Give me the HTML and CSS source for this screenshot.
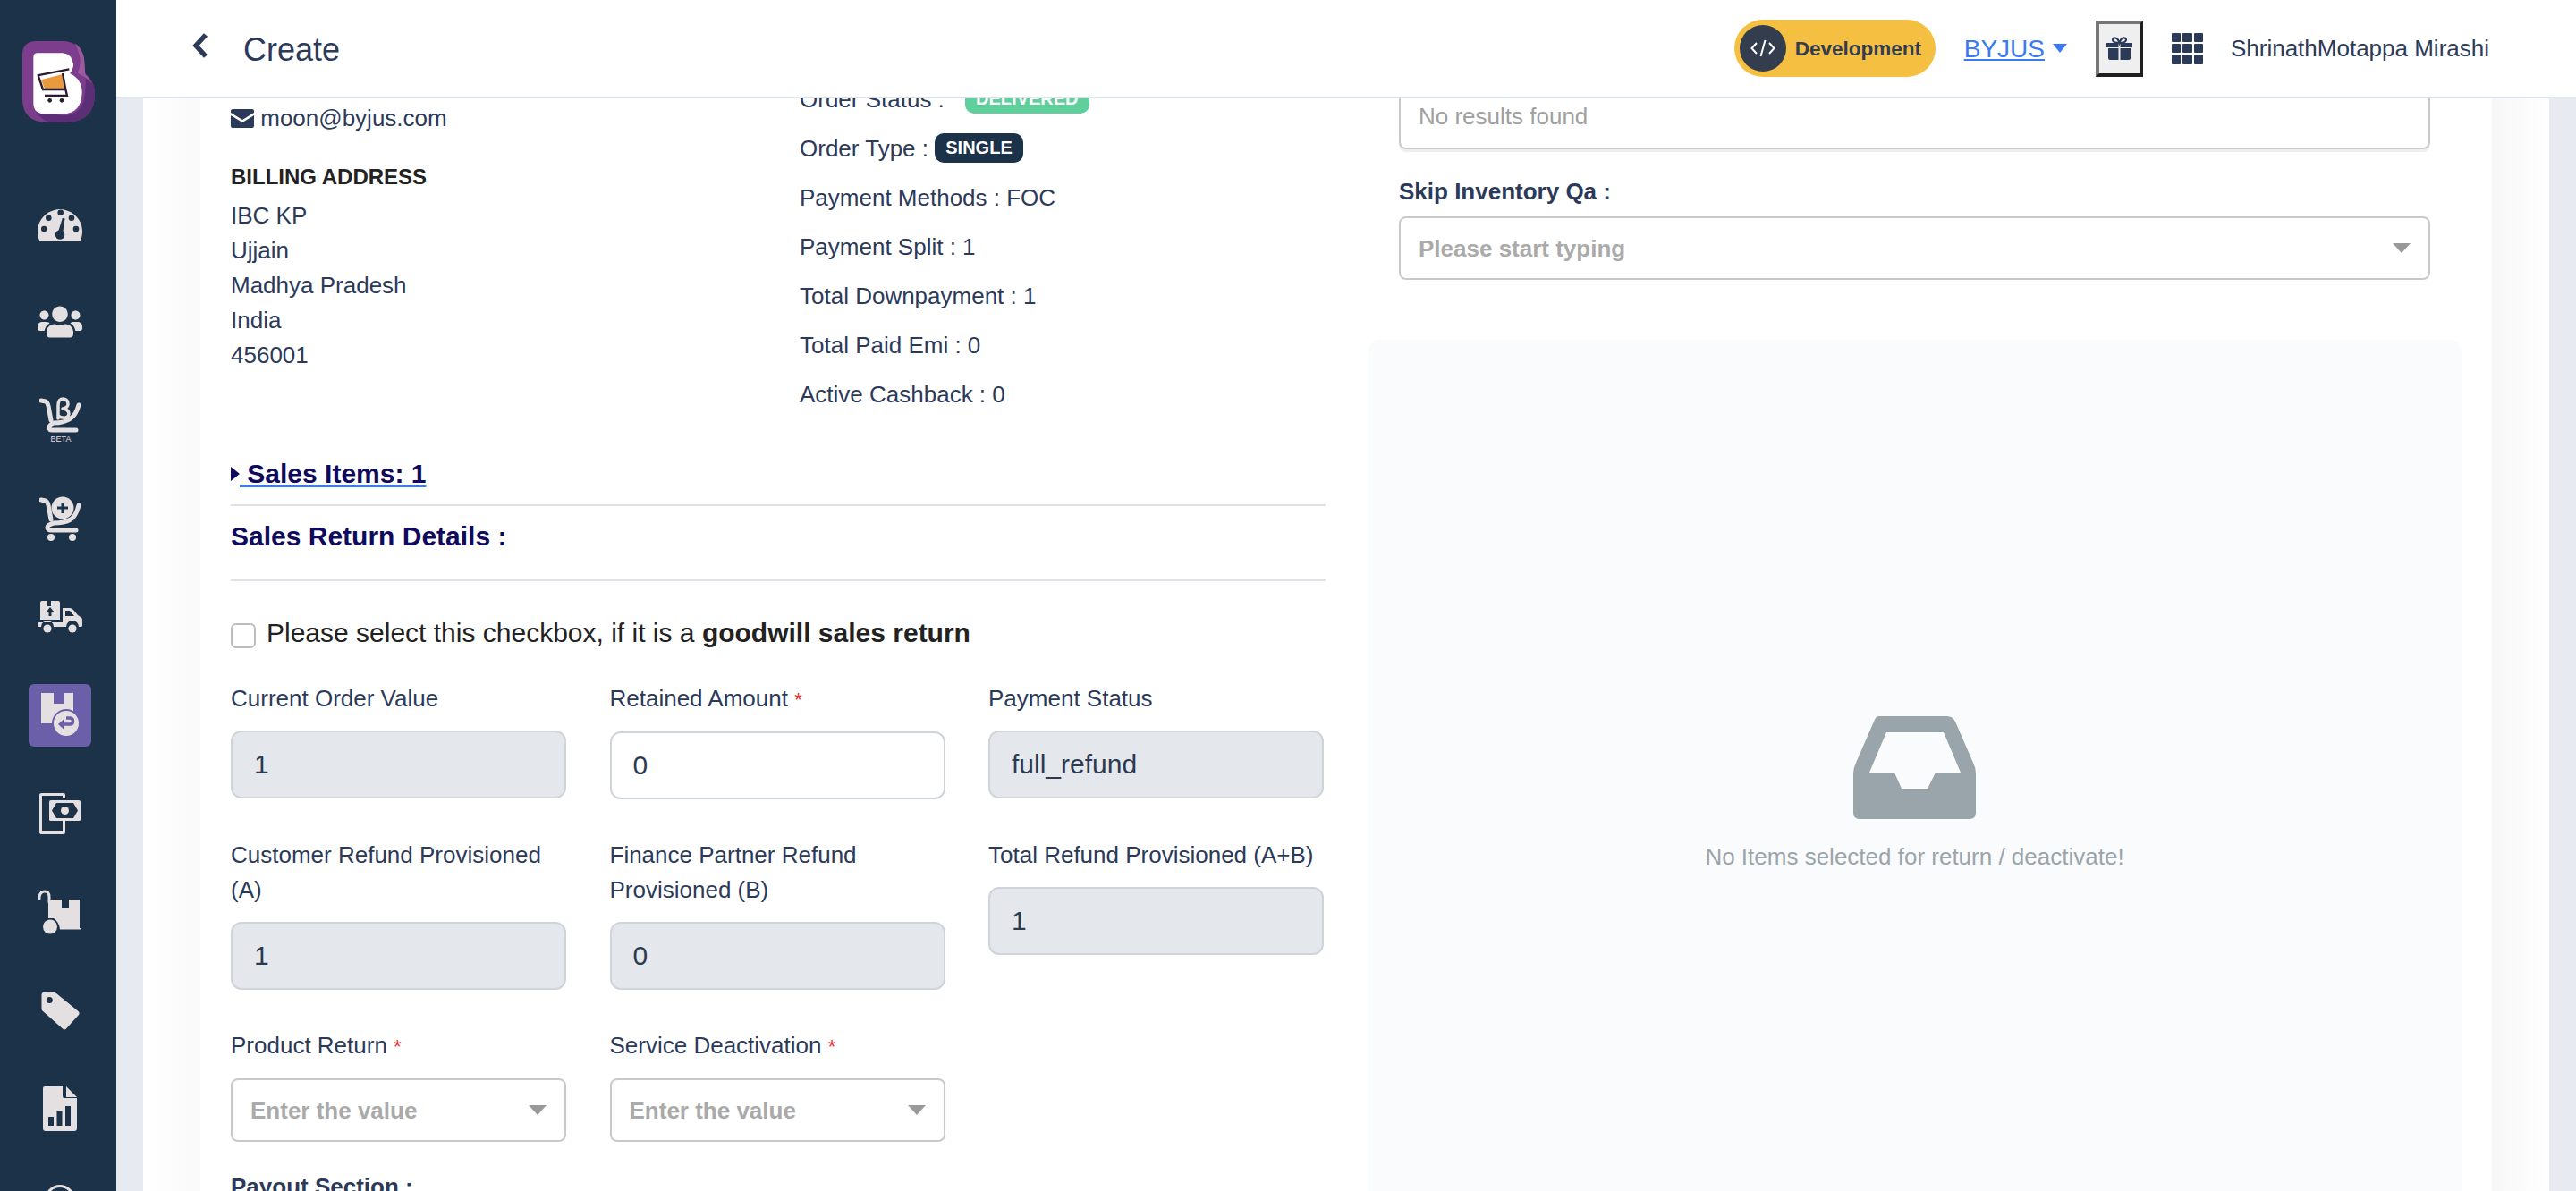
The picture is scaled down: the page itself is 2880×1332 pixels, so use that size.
FILE: index.html
```html
<!DOCTYPE html>
<html lang="en">
<head>
    <meta charset="UTF-8">
    <meta name="viewport" content="width=device-width, initial-scale=1.0">
    <title>Create</title>
    <link rel="stylesheet" href="styles.css">
</head>
<body>
    <div class="app">
        <aside class="sidebar">
            <svg class="logo" viewBox="0 0 300 330" width="100" height="110">
                <path fill="#7c3d8c" d="M15 65Q15 18 62 18H150Q205 18 222 75L226 128Q258 150 258 195Q258 290 160 290H95Q15 290 15 210Z"/>
                <path fill="#5b2e75" d="M60 255Q110 262 150 268Q205 268 222 215Q230 170 226 128Q258 150 258 195Q258 290 160 290H110Q80 285 60 255Z"/>
                <path fill="#9b5aa0" d="M190 25Q215 40 222 75L226 128Q240 140 248 160Q225 135 200 125Q222 80 190 25Z"/>
                <path fill="#fff" d="M52 72Q52 58 66 58H150Q180 60 186 95Q186 112 174 126Q215 145 215 190Q213 262 150 262H90Q52 262 52 225Z"/>
                <path fill="#e99a3c" d="M78 148L150 129L156 178L90 178Z"/>
                <path fill="none" stroke="#2b1c30" stroke-width="7" d="M65 133L172 112M68 133L84 180L160 180L150 126M160 180L165 201H90"/>
                <circle fill="#2b1c30" cx="107" cy="217" r="7"/>
                <circle fill="#2b1c30" cx="147" cy="217" r="7"/>
            </svg>
            <nav class="nav">
                <div class="nav-item">
                    <svg width="50" height="39" viewBox="0 0 50 39">
                        <path class="ico" d="M2.5 39A25 25 0 1 1 47.5 39Z"/>
                        <g class="ico-cut">
                            <circle cx="25.7" cy="6.7" r="3.3"/>
                            <circle cx="12.3" cy="12.7" r="3.3"/>
                            <circle cx="38" cy="12.7" r="3.3"/>
                            <circle cx="7.3" cy="25" r="3.3"/>
                            <circle cx="43" cy="25" r="3.3"/>
                            <circle cx="25" cy="31.5" r="5.2"/>
                            <path d="M22.5 30L27.8 13L30.5 13.6L28 31Z"/>
                        </g>
                    </svg>
                </div>
                <div class="nav-item">
                    <svg width="50" height="40" viewBox="0 0 640 512">
                        <path class="ico" d="M96 224c35.3 0 64-28.7 64-64s-28.7-64-64-64-64 28.7-64 64 28.7 64 64 64zm448 0c35.3 0 64-28.7 64-64s-28.7-64-64-64-64 28.7-64 64 28.7 64 64 64zm32 32h-64c-17.6 0-33.5 7.1-45.1 18.6 40.3 22.1 68.9 62 75.1 109.4h66c17.7 0 32-14.3 32-32v-32c0-35.3-28.7-64-64-64zm-256 0c61.9 0 112-50.1 112-112S381.9 32 320 32 208 82.1 208 144s50.1 112 112 112zm76.8 32h-8.3c-20.8 10-43.9 16-68.5 16s-47.6-6-68.5-16h-8.3C179.6 288 128 339.6 128 403.2V432c0 26.5 21.5 48 48 48h288c26.5 0 48-21.5 48-48v-28.8c0-63.6-51.6-115.2-115.2-115.2zm-223.7-13.4C161.5 263.1 145.6 256 128 256H64c-35.3 0-64 28.7-64 64v32c0 17.7 14.3 32 32 32h65.9c6.3-47.4 34.9-87.3 75.2-109.4z"/>
                    </svg>
                </div>
                <div class="nav-item">
                    <svg width="46" height="52" viewBox="0 0 46 52">
                        <g class="ico-line">
                            <path d="M2 4L7 5Q9 6 10 10L13 26"/>
                            <path d="M44 9Q41 20 35 24Q28 29 16 29Q11 31 11 34Q11 37 14 37H41"/>
                            <path class="beta-sign" d="M21 24V9Q21 2 27 2Q32 3 32 8Q32 12 26 13Q33 14 33 19Q32 24 26 23Q22 23 21 20"/>
                        </g>
                        <text class="beta" x="24" y="50" text-anchor="middle">BETA</text>
                    </svg>
                </div>
                <div class="nav-item">
                    <svg width="46" height="50" viewBox="0 0 46 50">
                        <g class="ico-line">
                            <path d="M2 4L7 5Q9 6 10 10L13 26"/>
                            <path d="M44 10Q41 22 35 26Q28 30 16 30Q9 32 9 35Q9 38 14 38H41"/>
                        </g>
                        <circle class="ico" cx="26" cy="13" r="12.5"/>
                        <path class="ico-cut-line" d="M26 7V19M20 13H32"/>
                        <circle class="ico" cx="13" cy="46" r="4"/>
                        <circle class="ico" cx="37" cy="46" r="4"/>
                    </svg>
                </div>
                <div class="nav-item">
                    <svg width="50" height="36" viewBox="0 0 50 36">
                        <path class="ico" d="M3 2Q3 0 5 0H11V6H15V0H23Q25 0 25 2V21H3Z"/>
                        <path class="ico" d="M28 8H36Q38 8 40 10L45 16L48 18Q50 19 50 21V28Q50 29 48 29H46A7 7 0 0 0 32 29H18A7 7 0 0 0 4 29H1Q0 29 0 28V24H28ZM31 11V17H41L36 11Z"/>
                        <circle class="ico" cx="11" cy="31" r="4.6"/>
                        <circle class="ico" cx="39" cy="31" r="4.6"/>
                        <path class="ico-fill-cut" d="M14 7L18 12H15.5V17H12.5V12H10Z"/>
                    </svg>
                </div>
                <div class="nav-item">
                    <div class="nav-active">
                        <svg width="44" height="50" viewBox="0 0 44 50">
                            <path class="ico" d="M1 0H15V12H27V0H37V34H1Z"/>
                            <circle class="ico ring" cx="29" cy="34" r="15"/>
                            <path class="active-arrow" d="M20 35L26 29.500V40.500Z"/>
                            <path class="active-turn" d="M24 35H33Q36.500 35 36.500 31.500Q36.500 28 33 28H29"/>
                        </svg>
                    </div>
                </div>
                <div class="nav-item">
                    <svg width="46" height="46" viewBox="0 0 46 46">
                        <path class="ico" d="M3 0H27Q29 0 29 2V6H26V3H3V42H26V31H29V44Q29 46 27 46H3Q0 46 0 44V2Q0 0 3 0Z"/>
                        <path class="ico" d="M13 8H44Q46 8 46 10V30Q46 31 44 31H13Q11 31 11 30V10Q11 8 13 8ZM19 11L14 19.500L19 28H38L43 19.500L38 11Z"/>
                        <circle class="ico" cx="28.500" cy="19.500" r="4.500"/>
                    </svg>
                </div>
                <div class="nav-item">
                    <svg width="50" height="50" viewBox="0 0 50 50">
                        <path class="ico-line thin" d="M2 10V8Q3 2 8 2Q13 2 13 8V14"/>
                        <path class="ico" d="M12 11H27V21H35V11H47V43H49V44.500H25Q24 36 18 32H12Z"/>
                        <circle class="ico" cx="14" cy="41.500" r="8"/>
                    </svg>
                </div>
                <div class="nav-item">
                    <svg width="43" height="43" viewBox="0 0 43 43">
                        <path class="ico" fill-rule="evenodd" d="M0.500 3Q0.500 1 3 0.800L13 0.400Q15 0.400 17 2L41.500 22Q43.500 24 42 26L28 41.500Q26 43.500 24 41.500L2 22Q0.500 21 0.500 19ZM9.300 6A3.500 3.500 0 1 0 9.300 13A3.500 3.500 0 1 0 9.300 6Z"/>
                    </svg>
                </div>
                <div class="nav-item">
                    <svg width="38" height="50" viewBox="0 0 38 50">
                        <path class="ico" d="M2 0H22V11Q22 13 24 13H38V47Q38 50 35 50H3Q0 50 0 47V2Q0 0 2 0Z"/>
                        <path class="ico" d="M26 0L38 12H26Z"/>
                        <g class="ico-cut">
                            <rect x="6" y="34" width="6" height="10"/>
                            <rect x="15.500" y="27" width="6" height="17"/>
                            <rect x="25" y="22" width="6" height="22"/>
                        </g>
                    </svg>
                </div>
                <div class="nav-item">
                    <svg width="50" height="50" viewBox="0 0 50 50">
                        <circle class="ico-ring" cx="25" cy="17" r="15.500"/>
                        <circle class="ico-ring" cx="25" cy="18" r="9"/>
                    </svg>
                </div>
            </nav>
        </aside>

        <div class="main">
            <header class="topbar">
                <svg class="back" width="18" height="30" viewBox="0 0 18 30">
                    <path d="M15 3L4 15L15 27"/>
                </svg>
                <span class="page-title">Create</span>
                <div class="topbar-right">
                    <div class="env-pill">
                        <span class="env-icon">
                            <svg width="28" height="28" viewBox="0 0 28 28">
                                <path d="M7 8L1.500 14L7 20M21 8L26.500 14L21 20M16.500 5L11.500 23"/>
                            </svg>
                        </span>
                        <span class="env-text">Development</span>
                    </div>
                    <a class="org-link" href="#">BYJUS</a>
                    <span class="org-caret"></span>
                    <button class="gift-btn" type="button">
                        <svg width="29" height="26" viewBox="0 0 29 26">
                            <path class="gift" d="M0 7H13.500V12H0ZM15.500 7H29V12H15.500ZM2 13H13.500V26H4Q2 26 2 24ZM15.500 13H27V24Q27 26 25 26H15.500Z"/>
                            <path class="gift-bow" d="M14.500 7Q8 7 7 4Q7 1 10 1.500Q13 2 14.500 7Q16 2 19 1.500Q22 1 22 4Q21 7 14.500 7Z"/>
                        </svg>
                    </button>
                    <div class="apps-grid">
                        <i></i><i></i><i></i><i></i><i></i><i></i><i></i><i></i><i></i>
                    </div>
                    <span class="user-name">ShrinathMotappa Mirashi</span>
                </div>
            </header>

            <div class="scroll">
                <div class="card">
                    <div class="card-inner">
                        <section class="col-left">
                            <div class="summary">
                                <div class="customer">
                                    <div class="email">
                                        <svg width="26" height="21" viewBox="0 0 26 21">
                                            <path d="M2 0H24Q26 0 26 2V4L13 12L0 4V2Q0 0 2 0ZM0 7L13 15L26 7V19Q26 21 24 21H2Q0 21 0 19Z"/>
                                        </svg>
                                        moon@byjus.com
                                    </div>
                                    <h4 class="billing-title">BILLING ADDRESS</h4>
                                    <div>IBC KP</div>
                                    <div>Ujjain</div>
                                    <div>Madhya Pradesh</div>
                                    <div>India</div>
                                    <div>456001</div>
                                </div>
                                <div class="order-info">
                                    <div class="info-row">Order Status : <span class="badge badge-green">DELIVERED</span></div>
                                    <div class="info-row">Order Type : <span class="badge badge-navy">SINGLE</span></div>
                                    <div class="info-row">Payment Methods : FOC</div>
                                    <div class="info-row">Payment Split : 1</div>
                                    <div class="info-row">Total Downpayment : 1</div>
                                    <div class="info-row">Total Paid Emi : 0</div>
                                    <div class="info-row">Active Cashback : 0</div>
                                </div>
                            </div>

                            <div class="sales-items">
                                <span class="tri"></span><a href="#">&nbsp;Sales Items: 1</a>
                            </div>
                            <hr class="rule rule-first">
                            <h3 class="section-title">Sales Return Details :</h3>
                            <hr class="rule rule-second">

                            <label class="goodwill">
                                <input type="checkbox">
                                <span>Please select this checkbox, if it is a <b>goodwill sales return</b></span>
                            </label>

                            <div class="form-grid">
                                <div class="field">
                                    <label>Current Order Value</label>
                                    <input class="input" type="text" value="1" disabled>
                                </div>
                                <div class="field">
                                    <label>Retained Amount <em>*</em></label>
                                    <input class="input" type="text" value="0">
                                </div>
                                <div class="field">
                                    <label>Payment Status</label>
                                    <input class="input" type="text" value="full_refund" disabled>
                                </div>
                                <div class="field">
                                    <label>Customer Refund Provisioned (A)</label>
                                    <input class="input" type="text" value="1" disabled>
                                </div>
                                <div class="field">
                                    <label>Finance Partner Refund Provisioned (B)</label>
                                    <input class="input" type="text" value="0" disabled>
                                </div>
                                <div class="field">
                                    <label>Total Refund Provisioned (A+B)</label>
                                    <input class="input" type="text" value="1" disabled>
                                </div>
                                <div class="field">
                                    <label>Product Return <em>*</em></label>
                                    <div class="select"><span>Enter the value</span><i class="select-arrow"></i></div>
                                </div>
                                <div class="field">
                                    <label>Service Deactivation <em>*</em></label>
                                    <div class="select"><span>Enter the value</span><i class="select-arrow"></i></div>
                                </div>
                            </div>
                            <div class="payout-title">Payout Section :</div>
                        </section>

                        <section class="col-right">
                            <div class="right-fields">
                                <div class="no-results">No results found</div>
                                <div class="skip-label">Skip Inventory Qa :</div>
                                <div class="select"><span>Please start typing</span><i class="select-arrow"></i></div>
                            </div>
                            <div class="empty-panel">
                                <svg width="137" height="115" viewBox="0 0 137 115">
                                    <path fill="#9aa5ab" fill-rule="evenodd" d="M28 0H105Q111 0 114 6L134 52Q137 58 137 64V108Q137 115 130 115H7Q0 115 0 108V64Q0 58 3 52L23 6Q25 0 28 0ZM37 18L18 63H46L54 81H83L92 63H120L101 18Z"/>
                                </svg>
                                <p>No Items selected for return / deactivate!</p>
                            </div>
                        </section>
                    </div>
                </div>
            </div>
        </div>
    </div>
</body>
</html>
```

FILE: styles.css
```css
* {
    box-sizing: border-box;
}

body {
    margin: 0;
    font-family: "Liberation Sans", Arial, sans-serif;
    font-size: 26px;
    line-height: 39px;
    color: #2c3a5a;
}

.app {
    display: flex;
    height: 100vh;
    overflow: hidden;
}

/* sidebar */
.sidebar {
    width: 130px;
    flex-shrink: 0;
    background: #1c3249;
    overflow: hidden;
    padding-top: 40px;
}

.logo {
    display: block;
    margin-left: 20px;
}

.nav {
    margin-top: 45px;
}

.nav-item {
    height: 110px;
    display: flex;
    align-items: center;
    justify-content: center;
    padding-left: 4px;
}

.nav-active {
    width: 70px;
    height: 70px;
    background: #6a5fa8;
    border-radius: 6px;
    display: flex;
    align-items: center;
    justify-content: center;
}

.ico {
    fill: #e4dfe0;
}

.ico-cut {
    fill: #1c3249;
}

.ico-fill-cut {
    fill: #1c3249;
}

.ico-line {
    fill: none;
    stroke: #e4dfe0;
    stroke-width: 5;
    stroke-linecap: round;
    stroke-linejoin: round;
}

.ico-line .beta-sign {
    stroke-width: 3.5;
}

.ico-line.thin {
    stroke-width: 3;
}

.ico-cut-line {
    fill: none;
    stroke: #1c3249;
    stroke-width: 3;
}

.ico-ring {
    fill: none;
    stroke: #e4dfe0;
    stroke-width: 3;
}

.ring {
    stroke: #6a5fa8;
    stroke-width: 2;
}

.active-arrow {
    fill: #6a5fa8;
}

.active-turn {
    fill: none;
    stroke: #6a5fa8;
    stroke-width: 3.5;
}

.beta {
    fill: #e4dfe0;
    font-size: 9px;
    font-family: "Liberation Sans", Arial, sans-serif;
}

/* top bar */
.main {
    flex: 1;
    min-width: 0;
    display: flex;
    flex-direction: column;
}

.topbar {
    height: 110px;
    flex-shrink: 0;
    display: flex;
    align-items: center;
    padding: 0 97px 0 85px;
    border-bottom: 2px solid #dee3e7;
    background: #fff;
}

.back {
    margin-top: -6px;
}

.back path {
    fill: none;
    stroke: #2c3a5a;
    stroke-width: 5.5;
}

.page-title {
    font-size: 36px;
    margin-left: 39px;
    padding-top: 2px;
}

.topbar-right {
    margin-left: auto;
    display: flex;
    align-items: center;
}

.env-pill {
    width: 225px;
    height: 64px;
    background: #f5bf42;
    border-radius: 32px;
    display: flex;
    align-items: center;
    padding-left: 6px;
}

.env-icon {
    width: 52px;
    height: 52px;
    border-radius: 50%;
    background: #343d4d;
    display: flex;
    align-items: center;
    justify-content: center;
}

.env-icon path {
    fill: none;
    stroke: #fff;
    stroke-width: 2;
}

.env-text {
    font-size: 22.5px;
    font-weight: bold;
    color: #333d4d;
    margin-left: 10px;
}

.org-link {
    font-size: 28px;
    color: #3a7bf5;
    margin-left: 32px;
}

.org-caret {
    width: 0;
    height: 0;
    border-left: 8px solid transparent;
    border-right: 8px solid transparent;
    border-top: 10px solid #3a7bf5;
    margin-left: 9px;
}

.gift-btn {
    width: 53px;
    height: 63px;
    margin-left: 32px;
    padding: 0;
    background: #efefef;
    border-width: 4px;
    border-style: solid;
    border-color: #767676 #1f1f1f #1f1f1f #767676;
    display: flex;
    align-items: center;
    justify-content: center;
}

.gift {
    fill: #2c3a5a;
}

.gift-bow {
    fill: none;
    stroke: #2c3a5a;
    stroke-width: 2.2;
}

.apps-grid {
    width: 35px;
    height: 35px;
    margin-left: 32px;
    display: grid;
    grid-template-columns: repeat(3, 1fr);
    gap: 2px;
}

.apps-grid i {
    background: #2c3a5a;
    border-radius: 1px;
}

.user-name {
    margin-left: 31px;
}

/* page */
.scroll {
    flex: 1;
    min-height: 0;
    overflow: hidden;
    background: #e7eaf0;
    padding: 0 30px;
}

.card {
    padding: 0 64px;
    background:
        linear-gradient(90deg, #fff, #f9f9f9) left / 64px 100% no-repeat,
        linear-gradient(90deg, #f7f7f7, #fff) right / 64px 100% no-repeat,
        #fff;
}

.card-inner {
    background: #fff;
    margin-top: -26px;
    padding: 0 34px;
    display: grid;
    grid-template-columns: 1224px 1223px;
    column-gap: 47px;
}

.summary {
    display: flex;
    height: 383px;
}

.customer {
    width: 636px;
    padding-top: 29px;
}

.email svg {
    vertical-align: -2px;
    fill: #2c3a5a;
}

.billing-title {
    margin: 28px 0 6px;
    font-size: 24px;
    line-height: 36px;
    font-weight: bold;
    color: #222;
}

.info-row {
    height: 55px;
    line-height: 55px;
}

.badge {
    display: inline-block;
    height: 33px;
    line-height: 33px;
    border-radius: 10px;
    color: #fff;
    font-size: 20px;
    font-weight: bold;
    padding: 0 12px;
    text-align: center;
    vertical-align: 3px;
}

.badge-green {
    background: #5fcf9b;
    margin-left: 16px;
}

.badge-navy {
    background: #1c3249;
}

.sales-items {
    margin-top: 40px;
    height: 45px;
    line-height: 45px;
    font-size: 30px;
    font-weight: bold;
    color: #0f0a5c;
    display: flex;
    align-items: center;
}

.tri {
    width: 0;
    height: 0;
    border-top: 8.5px solid transparent;
    border-bottom: 8.5px solid transparent;
    border-left: 10px solid #0f0a5c;
}

.sales-items a {
    color: #0f0a5c;
    text-decoration: underline;
    text-decoration-color: #3a7bf0;
    text-decoration-thickness: 3px;
}

.rule {
    border: 0;
    border-top: 2px solid #dee2e6;
    margin: 0;
}

.rule-first {
    margin-top: 12px;
}

.section-title {
    margin: 11px 0 0;
    font-size: 30px;
    line-height: 45px;
    font-weight: bold;
    color: #0f0a5c;
}

.rule-second {
    margin-top: 26px;
}

.goodwill {
    display: flex;
    align-items: center;
    height: 45px;
    margin-top: 35px;
    font-size: 30px;
    color: #222;
}

.goodwill input {
    appearance: none;
    width: 28px;
    height: 28px;
    margin: 6px 12px 0 0;
    border: 2px solid #bdbdbd;
    border-radius: 6px;
    background: #fff;
}

.form-grid {
    display: grid;
    grid-template-columns: repeat(3, 375px);
    column-gap: 48.5px;
    row-gap: 43px;
    align-items: start;
    margin-top: 32px;
}

.field label {
    display: block;
    margin-bottom: 16px;
}

.field em {
    font-style: normal;
    color: #f03030;
    font-size: 22px;
}

.input {
    display: block;
    width: 100%;
    height: 76px;
    padding: 0 24px;
    border: 2px solid #ced4da;
    border-radius: 12px;
    background: #fff;
    font-family: inherit;
    font-size: 30px;
    color: #2c3a50;
}

.input:disabled {
    background: #e4e8ec;
    opacity: 1;
}

.select {
    height: 71px;
    padding: 0 20px;
    border: 2px solid #c9c9c9;
    border-radius: 8px;
    display: flex;
    align-items: center;
    justify-content: space-between;
    font-weight: bold;
    color: #aaa;
    background: #fff;
}

.select span {
    padding-top: 2px;
}

.select-arrow {
    width: 0;
    height: 0;
    border-left: 10px solid transparent;
    border-right: 10px solid transparent;
    border-top: 11px solid #999;
}

.payout-title {
    margin-top: 31px;
    font-weight: bold;
}

.right-fields {
    padding: 10px 35px 0;
    height: 296px;
}

.no-results {
    height: 73px;
    line-height: 73px;
    padding-left: 20px;
    border: 2px solid #c9c9c9;
    border-top: 0;
    border-radius: 0 0 8px 8px;
    box-shadow: 0 3px 0 #eee;
    color: #a0a0a0;
}

.skip-label {
    margin-top: 28px;
    margin-bottom: 8px;
    font-weight: bold;
}

.empty-panel {
    height: 1018px;
    background: #fafbfc;
    border-radius: 14px;
    display: flex;
    flex-direction: column;
    align-items: center;
    justify-content: center;
    color: #9aa5ab;
}

.empty-panel p {
    margin: 23px 0 0;
}
```
